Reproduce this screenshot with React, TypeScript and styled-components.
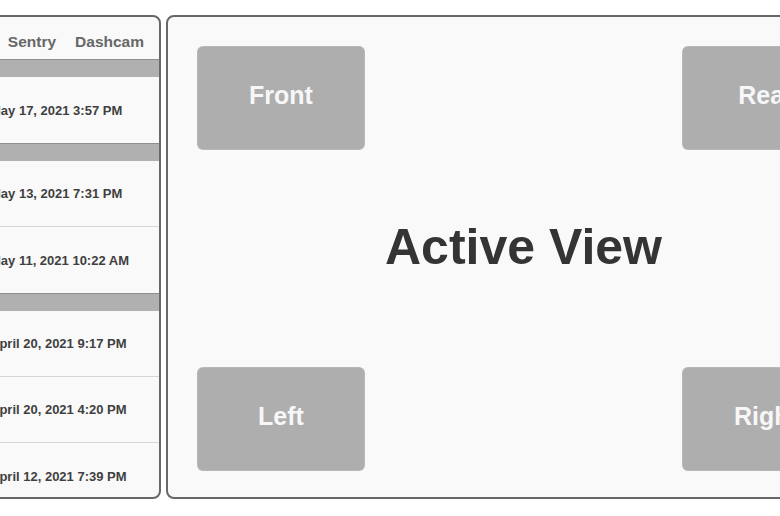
import React from "react";
import styled, { createGlobalStyle } from "styled-components";

const GlobalStyle = createGlobalStyle`
    html, body {
        margin: 0;
        padding: 0;
        overflow: hidden;
        background: #ffffff;
        font-family: "Liberation Sans", Arial, sans-serif;
    }
`;

const groups = [
    {
        id: 1,
        clips: ["May 17, 2021 3:57 PM"],
    },
    {
        id: 2,
        clips: ["May 13, 2021 7:31 PM", "May 11, 2021 10:22 AM"],
    },
    {
        id: 3,
        clips: [
            "April 20, 2021 9:17 PM",
            "April 20, 2021 4:20 PM",
            "April 12, 2021 7:39 PM",
        ],
    },
];

const tabs = ["Recent", "Sentry", "Dashcam"];

const cameras = ["Front", "Rear", "Left", "Right"];

const App = () => {
    return (
        <>
            <GlobalStyle />
            <Page>
                <ClipPanel>
                    <TabBar>
                        {tabs.map((t) => (
                            <Tab key={t}>{t}</Tab>
                        ))}
                    </TabBar>
                    <ClipList>
                        {groups.map((g) => (
                            <Group key={g.id}>
                                <GroupBar />
                                {g.clips.map((c) => (
                                    <ClipRow key={c}>
                                        <Thumb />
                                        <ClipDate>{c}</ClipDate>
                                    </ClipRow>
                                ))}
                            </Group>
                        ))}
                    </ClipList>
                </ClipPanel>
                <ViewPanel>
                    <CamButton type="button">{cameras[0]}</CamButton>
                    <Spacer />
                    <CamButton type="button">{cameras[1]}</CamButton>
                    <ActiveTitle>Active View</ActiveTitle>
                    <CamButton type="button">{cameras[2]}</CamButton>
                    <Spacer />
                    <CamButton type="button">{cameras[3]}</CamButton>
                </ViewPanel>
            </Page>
        </>
    );
};

export default App;

const Page = styled.div`
    display: flex;
    justify-content: center;
    gap: 5px;
    width: 780px;
    padding-top: 15px;
`;

const Panel = styled.div`
    flex-shrink: 0;
    box-sizing: border-box;
    height: 484px;
    border: 2px solid #686868;
    border-radius: 8px;
    background-color: #f9f9f9;
    overflow: hidden;
`;

const ClipPanel = styled(Panel)`
    width: 262px;
`;

const TabBar = styled.div`
    display: flex;
    justify-content: flex-end;
    align-items: center;
    gap: 19px;
    box-sizing: border-box;
    height: 42px;
    padding: 8px 15px 0 0;
`;

const Tab = styled.span`
    font-size: 15.5px;
    font-weight: bold;
    color: #676767;
`;

const ClipList = styled.div`
    display: flex;
    flex-direction: column;
`;

const Group = styled.div`
    display: flex;
    flex-direction: column;
    flex-shrink: 0;
`;

const GroupBar = styled.div`
    flex-shrink: 0;
    height: 17px;
    background-color: #b0b0b0;
    border-top: 1px solid #8e8e8e;
`;

const ClipRow = styled.div`
    display: flex;
    flex-shrink: 0;
    align-items: center;
    gap: 13px;
    height: 66px;
    box-sizing: border-box;
    padding: 0 12px;
    border-bottom: 1px solid #d6d6d6;

    &:last-child {
        border-bottom: none;
    }
`;

const Thumb = styled.div`
    width: 64px;
    height: 44px;
    border-radius: 4px;
    background-color: #c4c4c4;
`;

const ClipDate = styled.span`
    font-size: 13px;
    font-weight: bold;
    color: #3f3f3f;
`;

const ViewPanel = styled(Panel)`
    width: 715px;
    display: grid;
    grid-template-columns: 168px 1fr 168px;
    grid-template-rows: 104px 1fr 104px;
    padding: 29px 29px 26px;
`;

const Spacer = styled.div``;

const CamButton = styled.button`
    border: 1px dotted #c2c2c2;
    border-radius: 6px;
    background-color: #aeaeae;
    color: #f7f7f7;
    font-family: "Liberation Sans", Arial, sans-serif;
    font-size: 25px;
    font-weight: bold;
    padding: 0 0 6px;
    cursor: pointer;
`;

const ActiveTitle = styled.div`
    grid-column: 1 / 4;
    display: flex;
    justify-content: center;
    align-items: center;
    padding-bottom: 24px;
    font-size: 50px;
    font-weight: bold;
    color: #343434;
`;
